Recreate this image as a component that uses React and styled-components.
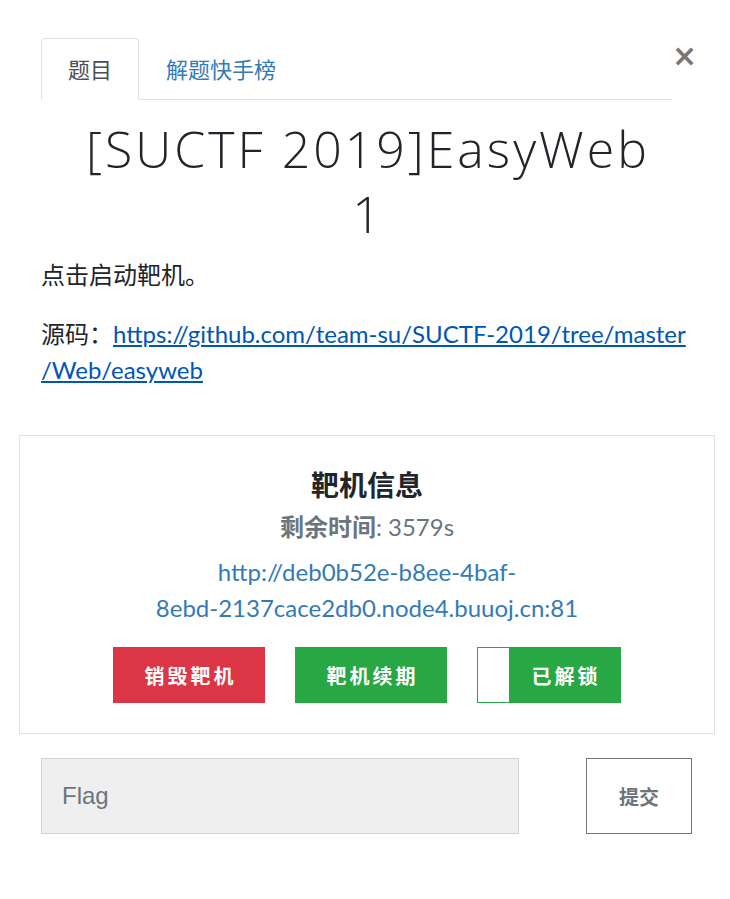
import React from 'react';
import styled, { createGlobalStyle } from 'styled-components';

const GlobalStyle = createGlobalStyle`
  html, body {
    margin: 0;
    padding: 0;
    background: #fff;
  }
  body {
    font-family: Lato, "Noto Sans CJK SC", sans-serif;
    color: #212529;
  }
`;

const Modal = styled.div`
  width: 730px;
  box-sizing: border-box;
  padding: 38px 15px 40px 19px;
`;

const Header = styled.div`
  display: flex;
  padding: 0 23px 0 22px;
`;

const Tabs = styled.ul`
  flex: 1;
  display: flex;
  margin: 0;
  padding: 0;
  list-style: none;
  border-bottom: 1px solid #dee2e6;
`;

const Tab = styled.li`
  box-sizing: border-box;
  height: 62px;
  margin-bottom: -1px;
  padding: 0 26px 3px;
  display: flex;
  align-items: center;
  font-size: 22px;
  color: ${p => (p.$active ? '#495057' : '#337ab7')};
  background: ${p => (p.$active ? '#fff' : 'transparent')};
  border: 1px solid ${p => (p.$active ? '#dee2e6' : 'transparent')};
  border-bottom-color: ${p => (p.$active ? '#fff' : 'transparent')};
  border-radius: 4px 4px 0 0;
`;

const Close = styled.button`
  width: 20px;
  margin-top: 3px;
  align-self: flex-start;
  padding: 0;
  border: none;
  background: none;
  font-family: "DejaVu Sans", sans-serif;
  font-size: 30px;
  font-weight: bold;
  line-height: 1;
  color: #777;
`;

const Body = styled.div`
  padding: 0 20px 0 22px;
`;

const Title = styled.h1`
  margin: 17px 0 10px;
  padding: 0 40px;
  text-align: center;
  font-family: "Open Sans", "Noto Sans CJK SC", sans-serif;
  font-weight: 300;
  font-size: 50px;
  letter-spacing: 3px;
  line-height: 65px;
  color: #212529;
`;

const Para = styled.p`
  margin: 0 0 23px;
  font-size: 24px;
  line-height: 36px;
  color: #212529;
`;

const SourceLink = styled.a`
  color: #0056b3;
  text-decoration: underline;
`;

const Card = styled.div`
  margin-top: 47px;
  border: 1px solid #dee2e6;
  padding: 31px 20px 30px;
  display: flex;
  flex-direction: column;
  align-items: center;
  text-align: center;
`;

const CardTitle = styled.h4`
  margin: 0;
  font-size: 28px;
  font-weight: 700;
  line-height: 36px;
  color: #212529;
`;

const Remaining = styled.div`
  margin-top: 6px;
  font-size: 24px;
  line-height: 36px;
  color: #6c757d;
`;

const Label = styled.span`
  font-weight: 700;
`;

const Url = styled.a`
  margin-top: 9px;
  font-size: 24px;
  line-height: 36px;
  color: #337ab7;
  text-decoration: none;
`;

const Actions = styled.div`
  margin-top: 21px;
  display: flex;
  gap: 30px;
`;

const Action = styled.button`
  box-sizing: border-box;
  width: ${p => p.$w}px;
  height: 56px;
  padding: 0;
  border: 1px solid ${p => p.$bg};
  background: ${p => p.$bg};
  color: #fff;
  font-family: "Noto Sans CJK SC", sans-serif;
  font-size: 20px;
  font-weight: 700;
  letter-spacing: 3px;
  display: flex;
  align-items: stretch;
`;

const Knob = styled.span`
  width: 31px;
  background: #fff;
`;

const ActionText = styled.span`
  flex: 1;
  display: flex;
  align-items: center;
  justify-content: center;
  padding-left: 3px;
`;

const FlagRow = styled.form`
  margin-top: 24px;
  padding: 0 23px 0 22px;
  display: flex;
  justify-content: space-between;
`;

const FlagInput = styled.input`
  box-sizing: border-box;
  width: 478px;
  height: 76px;
  padding: 0 20px;
  background: #efefef;
  border: 1px solid #ced4da;
  font-family: "Liberation Sans", sans-serif;
  font-size: 24px;
  color: #495057;
  &::placeholder {
    color: #6c757d;
  }
`;

const Submit = styled.button`
  box-sizing: border-box;
  width: 106px;
  height: 76px;
  background: #fff;
  border: 1px solid #6c757d;
  color: #6c757d;
  font-family: "Noto Sans CJK SC", sans-serif;
  font-size: 20px;
  font-weight: 700;
  padding-top: 2px;
`;

export default function App() {
  return (
    <>
      <GlobalStyle />
      <Modal>
        <Header>
          <Tabs>
            <Tab $active>题目</Tab>
            <Tab>解题快手榜</Tab>
          </Tabs>
          <Close aria-label="Close">×</Close>
        </Header>
        <Body>
          <Title>[SUCTF 2019]EasyWeb 1</Title>
          <Para>点击启动靶机。</Para>
          <Para>
            源码：
            <SourceLink href="#">
              https://github.com/team-su/SUCTF-2019/tree/master
              <br />
              /Web/easyweb
            </SourceLink>
          </Para>
        </Body>
        <Card>
          <CardTitle>靶机信息</CardTitle>
          <Remaining>
            <Label>剩余时间</Label>: 3579s
          </Remaining>
          <Url href="#">
            http://deb0b52e-b8ee-4baf-
            <br />
            8ebd-2137cace2db0.node4.buuoj.cn:81
          </Url>
          <Actions>
            <Action $bg="#dc3545" $w={152}>
              <ActionText>销毁靶机</ActionText>
            </Action>
            <Action $bg="#28a745" $w={152}>
              <ActionText>靶机续期</ActionText>
            </Action>
            <Action $bg="#28a745" $w={144}>
              <Knob />
              <ActionText>已解锁</ActionText>
            </Action>
          </Actions>
        </Card>
        <FlagRow onSubmit={e => e.preventDefault()}>
          <FlagInput placeholder="Flag" />
          <Submit type="submit">提交</Submit>
        </FlagRow>
      </Modal>
    </>
  );
}
